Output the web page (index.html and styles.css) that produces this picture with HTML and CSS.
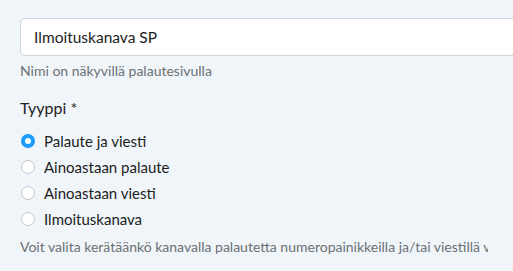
FILE: index.html
```html
<!DOCTYPE html>
<html lang="fi">
<head>
<meta charset="utf-8">
<link rel="stylesheet" href="styles.css">
</head>
<body>
<div class="form">
  <div class="field">
    <div class="input">Ilmoituskanava SP</div>
    <div class="help">Nimi on näkyvillä palautesivulla</div>
  </div>
  <div class="field type">
    <div class="label">Tyyppi *</div>
    <div class="radios">
      <div class="radio checked"><span class="dot"></span><span>Palaute ja viesti</span></div>
      <div class="radio"><span class="dot"></span><span>Ainoastaan palaute</span></div>
      <div class="radio"><span class="dot"></span><span>Ainoastaan viesti</span></div>
      <div class="radio"><span class="dot"></span><span>Ilmoituskanava</span></div>
    </div>
    <div class="help help-bottom">Voit valita kerätäänkö kanavalla palautetta numeropainikkeilla ja/tai viestillä vai toimiiko kanava ilmoituskanavana</div>
  </div>
</div>
</body>
</html>
```
FILE: styles.css
```css
html, body {
  margin: 0;
  padding: 0;
  background: #f0f5f9;
  overflow: hidden;
}
body {
  font-family: Lato, "Open Sans", sans-serif;
  color: #222;
  width: 513px;
  height: 271px;
}
.form {
  padding: 18px 0 0 20px;
  display: flex;
  flex-direction: column;
}
.input {
  box-sizing: border-box;
  width: 620px;
  height: 38px;
  background: #fff;
  border: 1px solid #cfd4da;
  border-radius: 5px;
  padding: 0 13px;
  display: flex;
  align-items: center;
  font-size: 15.5px;
  color: #1d1d1d;
}
.help {
  font-size: 14px;
  color: #6b7075;
  margin-top: 6px;
  line-height: 18px;
  white-space: nowrap;
}
.type {
  margin-top: 18px;
}
.label {
  font-size: 16px;
  line-height: 20px;
  color: #222;
}
.radios {
  margin-top: 10px;
  display: flex;
  flex-direction: column;
}
.radio {
  display: flex;
  align-items: center;
  gap: 9px;
  height: 26px;
  font-size: 15px;
  color: #1d1d1d;
  padding-left: 1px;
}
.dot {
  box-sizing: border-box;
  width: 14px;
  height: 14px;
  border-radius: 50%;
  border: 1px solid #c4c8cc;
  background: #fff;
}
.checked .dot {
  border: 4.5px solid #1a9cff;
}
.help-bottom {
  margin-top: 6px;
  width: 468px;
  overflow: hidden;
}
```
